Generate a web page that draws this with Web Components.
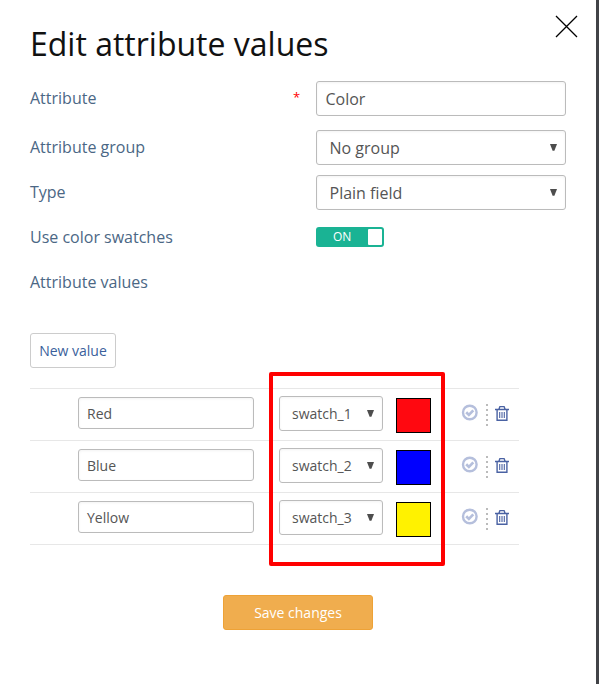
<!DOCTYPE html>
<html lang="en">
<head>
<meta charset="utf-8">
<title>Edit attribute values</title>
<style>
html,body{margin:0;height:684px;overflow:hidden;background:#fff}
body{font-family:"Open Sans","Noto Sans",sans-serif;color:#555}
</style>
</head>
<body>
<attribute-dialog heading="Edit attribute values">
  <form-row label="Attribute" required><text-box>Color</text-box></form-row>
  <form-row label="Attribute group" style="margin-top:14px"><select-box>No group</select-box></form-row>
  <form-row label="Type"><select-box>Plain field</select-box></form-row>
  <form-row label="Use color swatches"><toggle-switch>ON</toggle-switch></form-row>
  <form-row label="Attribute values"></form-row>
  <push-button class="new">New value</push-button>
  <value-list>
    <value-row name="Red" swatch="swatch_1" color="#ff0810"></value-row>
    <value-row name="Blue" swatch="swatch_2" color="#0000ff"></value-row>
    <value-row name="Yellow" swatch="swatch_3" color="#fff200"></value-row>
  </value-list>
  <push-button class="save" kind="primary">Save changes</push-button>
</attribute-dialog>
<script>
function define(name, html, setup) {
  const t = document.createElement('template');
  t.innerHTML = html;
  customElements.define(name, class extends HTMLElement {
    constructor() {
      super();
      this.attachShadow({mode: 'open'}).append(t.content.cloneNode(true));
    }
    connectedCallback() { if (setup) setup(this, this.shadowRoot); }
  });
}

define('close-icon', `
<style>:host{display:block;width:23px;height:23px}svg{display:block}</style>
<svg width="23" height="23" viewBox="0 0 23 23"><path d="M1 1L22 22M22 1L1 22" stroke="#000" stroke-width="1.3" fill="none"/></svg>`);

define('attribute-dialog', `
<style>
:host{display:block;box-sizing:border-box;width:599px;height:684px;padding:0 30px;border-right:3px solid #414347;position:relative;background:#fff}
h1{margin:0;padding-top:22px;height:59px;font-size:32px;line-height:44px;font-weight:400;color:#111;white-space:nowrap}
close-icon{position:absolute;left:555px;top:15px}
::slotted(form-row:not(:first-child)){margin-top:10px}
::slotted(.new){width:86px;margin-top:33px}
::slotted(value-list){margin-top:20px}
::slotted(.save){width:150px;margin:50px 0 0 193px}
</style>
<h1></h1><close-icon></close-icon><slot></slot>`,
(el, r) => { r.querySelector('h1').textContent = el.getAttribute('heading'); });

define('form-row', `
<style>
:host{display:grid;grid-template-columns:263px 23px 250px;height:35px;align-items:center}
label{padding-bottom:2px;font-size:16px;line-height:22px;color:#4b6785;white-space:nowrap}
i{padding-bottom:3px;font-style:normal;font-size:13px;line-height:18px;color:#f00}
</style>
<label></label><i></i><slot></slot>`,
(el, r) => {
  r.querySelector('label').textContent = el.getAttribute('label');
  if (el.hasAttribute('required')) r.querySelector('i').textContent = '*';
});

define('text-box', `
<style>
:host{display:flex;align-items:center;box-sizing:border-box;height:35px;padding:1px 0 0 8.5px;border:1px solid #bbb;border-radius:3px;background:#fff;box-shadow:inset 0 1px 3px #0000000d;font-size:16px;line-height:22px;color:#555}
:host([compact]){height:32px;font-size:14px;line-height:19px;padding-left:8px;padding-top:0}
</style><slot></slot>`);

define('select-box', `
<style>
:host{display:flex;align-items:center;justify-content:space-between;box-sizing:border-box;height:35px;padding:1px 8px 0 12.5px;border:1px solid #bbb;border-radius:3px;background:#fff;box-shadow:inset 0 1px 3px #0000000d;font-size:16px;line-height:22px;color:#555}
:host([compact]){font-size:14px;line-height:19px;padding-left:12px}
:host([compact]) span{padding-bottom:2px}
svg{display:block}
</style><span><slot></slot></span>
<svg width="8" height="8" viewBox="0 0 8 8"><path d="M1 0H8L5.4 6.8H3.6Z" fill="#4d4d4d"/></svg>`);

define('toggle-switch', `
<style>
:host{display:flex;align-items:center;justify-content:space-between;box-sizing:border-box;width:68px;height:20px;margin-bottom:1px;padding:0 2px 0 17px;border-radius:3px;background:#1ab394;color:#fff;font-size:12px;line-height:16px}
b{width:14px;height:16px;background:#fff;border-radius:1px}
</style><span><slot></slot></span><b></b>`);

define('push-button', `
<style>
:host{display:flex;align-items:center;justify-content:center;box-sizing:border-box;height:35px;border:1px solid #ccc;border-radius:3px;background:#fff;font-size:14px;line-height:19px;color:#3a5f9b;white-space:nowrap}
:host([kind=primary]){background:#f0ad4e;border-color:#eea236;color:#fff}
</style><slot></slot>`);

define('value-list', `
<style>
:host{display:block;position:relative;width:489px;border-top:1px solid #e7e7e7}
.mark{position:absolute;left:239px;top:-17px;width:176px;height:194px;box-sizing:border-box;border:4px solid #f00;border-radius:2px}
</style><slot></slot><div class="mark"></div>`);

define('value-row', `
<style>
:host{display:grid;grid-template-columns:176px 129px 48px 47px 9px 15px;column-gap:0;align-items:start;box-sizing:border-box;height:52px;padding:7px 0 0 48px;border-bottom:1px solid #e7e7e7}
text-box{margin-top:1px}
select-box{margin-left:25px}
.swatch{margin:2px 0 0 13px;box-sizing:border-box;width:35px;height:35px;border:1px solid #000}
svg{display:block}
.ok{margin:8px 0 0 30px}
.dots{margin:7px 0 0 8px}
.del{margin:9px 0 0 8px}
</style>
<text-box compact></text-box><select-box compact></select-box><div class="swatch"></div>
<svg class="ok" width="17" height="17" viewBox="0 0 17 17"><circle cx="8.8" cy="8.5" r="6.8" fill="none" stroke="#b5bfdc" stroke-width="2.4"/><path d="M5.2 8.2L7.9 10.9L12.3 6.4" fill="none" stroke="#b5bfdc" stroke-width="2.7"/></svg>
<svg class="dots" width="2" height="23" viewBox="0 0 2 23"><path d="M1 1V23" stroke="#bbb" stroke-width="2" stroke-dasharray="2 3"/></svg>
<svg class="del" width="15" height="17" viewBox="0 0 15 17"><path d="M0 4.5H14M4 4L4.9 1.6H9.1L10 4M2.1 5V15.3H11.9V5" fill="none" stroke="#4a62a3" stroke-width="1.4"/><path d="M4.7 7V13M7 7V13M9.3 7V13" stroke="#4a62a3" stroke-width="1.1"/></svg>`,
(el, r) => {
  r.querySelector('text-box').textContent = el.getAttribute('name');
  r.querySelector('select-box').textContent = el.getAttribute('swatch');
  r.querySelector('.swatch').style.background = el.getAttribute('color');
});
</script>
</body>
</html>
